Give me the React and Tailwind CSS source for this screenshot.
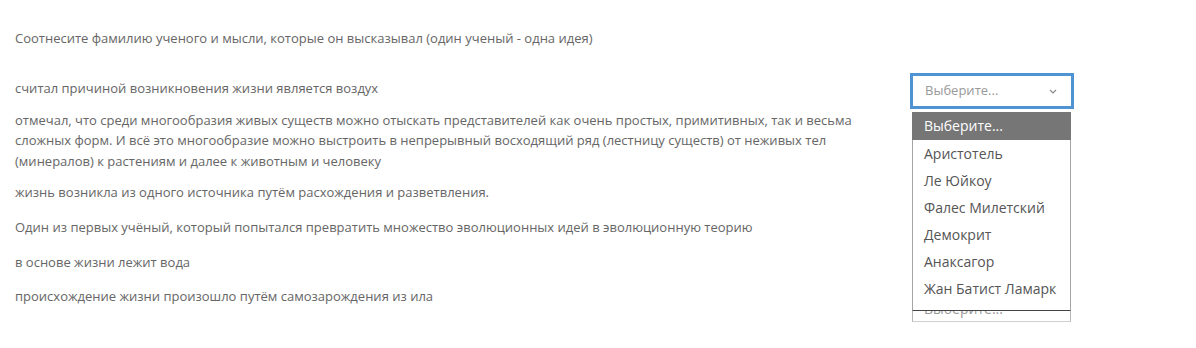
import React from "react";

const rows = [
  { text: "считал причиной возникновения жизни является воздух", mt: "mt-[30px]" },
  {
    text: "отмечал, что среди многообразия живых существ можно отыскать представителей как очень простых, примитивных, так и весьма сложных форм. И всё это многообразие можно выстроить в непрерывный восходящий ряд (лестницу существ) от неживых тел (минералов) к растениям и далее к животным и человеку",
    mt: "mt-[11px]",
  },
  { text: "жизнь возникла из одного источника путём расхождения и разветвления.", mt: "mt-[10.5px]" },
  { text: "Один из первых учёный, который попытался превратить множество эволюционных идей в эволюционную теорию", mt: "mt-[14.5px]" },
  { text: "в основе жизни лежит вода", mt: "mt-[14.5px]" },
  { text: "происхождение жизни произошло путём самозарождения из ила", mt: "mt-[14px]" },
];

const options = ["Аристотель", "Ле Юйкоу", "Фалес Милетский", "Демокрит", "Анаксагор", "Жан Батист Ламарк"];

function Dropdown() {
  return (
    <div className="absolute left-[912px] top-[112px] w-[159px] z-10 bg-white text-[14px] text-[#555]">
      <div className="h-[28px] bg-[#767676] text-white pl-[12px] leading-[28px]">Выберите...</div>
      <div className="border-x border-[#a5a5a5]">
        {options.map((o) => (
          <div key={o} className="h-[27px] leading-[27px] pl-[11px] whitespace-nowrap">
            {o}
          </div>
        ))}
        <div className="h-[8px]" />
      </div>
      <div className="border-t border-[#444] border-x border-b border-x-[#b5b5b5] border-b-[#cfcfcf] h-[12px] overflow-hidden">
        <div className="pl-[11px] text-[14px] leading-[14px] -mt-[9px] text-[#999]">Выберите...</div>
      </div>
    </div>
  );
}

export default function App() {
  return (
    <div
      className="relative w-[1196px] h-[348px] bg-white text-[13px] text-[#666]"
      style={{ fontFamily: '"Open Sans", sans-serif' }}
    >
      <div className="pl-[15px] pt-[28px]">
        <div className="leading-[20px]">
          Соотнесите фамилию ученого и мысли, которые он высказывал (один ученый - одна идея)
        </div>
        {rows.map((r, i) => (
          <div key={i} className={`${r.mt} flex items-start`}>
            <div className="w-[845px] leading-[20.5px]">{r.text}</div>
            {i === 0 && (
              <div className="ml-[50px] -mt-[5px] -mb-[16px] w-[164px] h-[36px] border-[3px] border-[#4f93d3] flex items-center justify-between pl-[12px] pr-[14px] text-[#999]">
                <span>Выберите...</span>
                <svg width="8" height="5" viewBox="0 0 8 5" fill="none">
                  <path d="M1 1l3 3 3-3" stroke="#888" strokeWidth="1.2" />
                </svg>
              </div>
            )}
          </div>
        ))}
      </div>
      <Dropdown />
    </div>
  );
}
